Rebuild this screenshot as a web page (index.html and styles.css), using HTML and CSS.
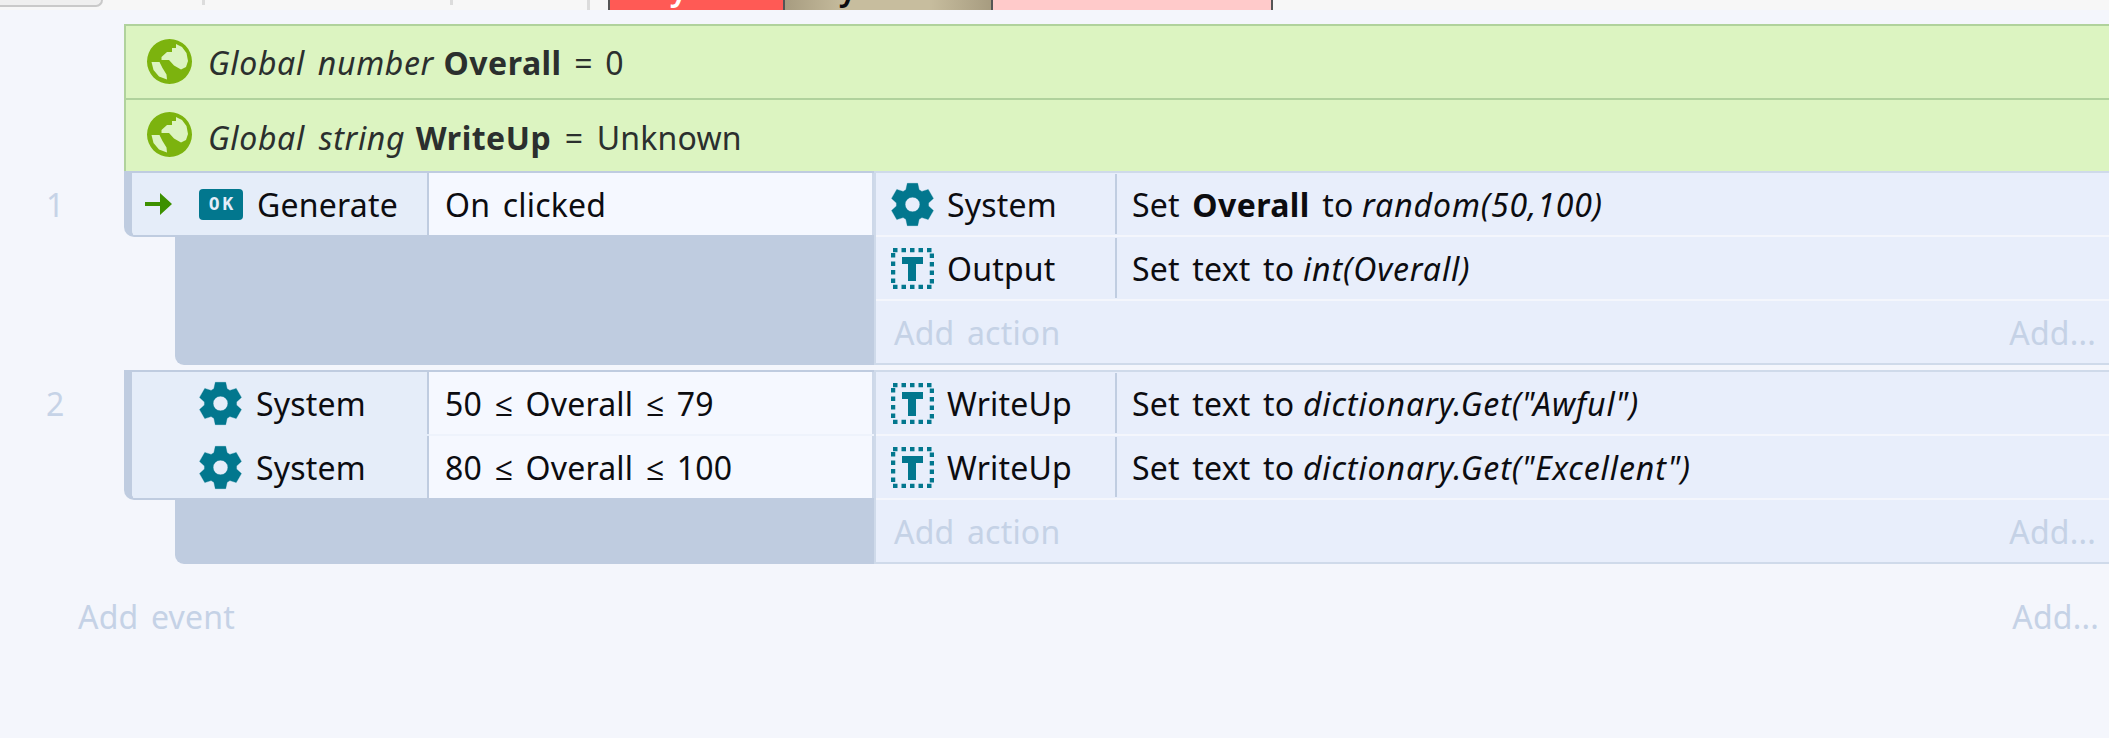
FILE: index.html
```html
<!DOCTYPE html>
<html lang="en">
<head>
<meta charset="utf-8">
<title>Event sheet</title>
<link rel="stylesheet" href="styles.css">
</head>
<body>
<svg class="defs" width="0" height="0" aria-hidden="true">
  <symbol id="gear" viewBox="0 0 24 24">
    <path fill-rule="evenodd" stroke-linejoin="round" d="M8.3 3.8 9.1.2H14.9L15.7 3.8 17.25 4.7 20.77 3.59 23.67 8.61 20.95 11.1V12.9L23.67 15.39 20.77 20.41 17.25 19.3 15.7 20.2 14.9 23.8H9.1L8.3 20.2 6.75 19.3 3.23 20.41.33 15.39 3.05 12.9V11.1L.33 8.61 3.23 3.59 6.75 4.7ZM12 7.9a4.1 4.1 0 1 0 0 8.2a4.1 4.1 0 1 0 0-8.2Z"/>
  </symbol>
  <symbol id="textobj" viewBox="0 0 43 41">
    <rect class="t-frame" x="2" y="2" width="39" height="37"/>
    <path d="M11 9H32V16H25V33H17V16H11Z"/>
  </symbol>
  <symbol id="globe" viewBox="0 0 45 45">
    <path fill-rule="evenodd" d="M22.5 0a22.5 22.5 0 1 0 0 45a22.5 22.5 0 1 0 0-45ZM29 5V9H25V13H20L14.5 18V21H22L27 26.5 34 30.5 39 28 41 22 39.5 14 35 8ZM4.5 23H12.5L15.5 29 19.5 35.5 20 40.5 12 37.5 6.5 31Z"/>
  </symbol>
</svg>

<header class="toolbar">
  <div class="tb-button"></div>
  <div class="tb-tab tb-tab-a"></div>
  <div class="tb-tab tb-tab-b"></div>
  <div class="tb-tab tb-tab-c"></div>
  <div class="seg seg-red"><span>y</span></div>
  <div class="seg seg-tan"><span>y</span></div>
  <div class="seg seg-pink"></div>
</header>

<main class="sheet">
  <section class="globals">
    <div class="global"><svg class="ic-globe"><use href="#globe"/></svg><p><i>Global number</i> <b>Overall</b> = 0</p></div>
    <div class="global"><svg class="ic-globe"><use href="#globe"/></svg><p><i>Global string</i> <b>WriteUp</b> = Unknown</p></div>
  </section>

  <section class="event">
    <div class="num">1</div>
    <div class="ev-left">
      <div class="conds">
        <div class="cond">
          <div class="cond-obj">
            <svg class="ic-arrow" viewBox="0 0 27 22"><path d="M0 9H15V0L27 11 15 22V13H0Z"/></svg>
            <span class="ic-ok">OK</span>
            <span>Generate</span>
          </div>
          <div class="cond-param">On clicked</div>
        </div>
      </div>
      <div class="tail"></div>
    </div>
    <div class="ev-right">
      <div class="act">
        <div class="act-obj"><svg class="ic-gear"><use href="#gear"/></svg><span>System</span></div>
        <div class="act-param"><span>Set <b>Overall</b> to <i>random(50,100)</i></span></div>
      </div>
      <div class="act">
        <div class="act-obj"><svg class="ic-text"><use href="#textobj"/></svg><span>Output</span></div>
        <div class="act-param"><span>Set text to <i>int(Overall)</i></span></div>
      </div>
      <div class="act act-add"><span>Add action</span><span>Add...</span></div>
    </div>
  </section>

  <section class="event">
    <div class="num">2</div>
    <div class="ev-left">
      <div class="conds">
        <div class="cond">
          <div class="cond-obj"><svg class="ic-gear"><use href="#gear"/></svg><span>System</span></div>
          <div class="cond-param">50 ≤ Overall ≤ 79</div>
        </div>
        <div class="cond">
          <div class="cond-obj"><svg class="ic-gear"><use href="#gear"/></svg><span>System</span></div>
          <div class="cond-param">80 ≤ Overall ≤ 100</div>
        </div>
      </div>
      <div class="tail"></div>
    </div>
    <div class="ev-right">
      <div class="act">
        <div class="act-obj"><svg class="ic-text"><use href="#textobj"/></svg><span>WriteUp</span></div>
        <div class="act-param"><span>Set text to <i>dictionary.Get("Awful")</i></span></div>
      </div>
      <div class="act">
        <div class="act-obj"><svg class="ic-text"><use href="#textobj"/></svg><span>WriteUp</span></div>
        <div class="act-param"><span>Set text to <i>dictionary.Get("Excellent")</i></span></div>
      </div>
      <div class="act act-add"><span>Add action</span><span>Add...</span></div>
    </div>
  </section>

  <footer class="add-event"><span>Add event</span><span>Add...</span></footer>
</main>
</body>
</html>
```
FILE: styles.css
```css
* { box-sizing: border-box; }
html, body { margin: 0; height: 100%; }
body {
  background: #f4f6fc;
  color: #0c0c10;
  font-family: "Noto Sans", "Open Sans", sans-serif;
  font-size: 32px;
  letter-spacing: 0.2px;
  word-spacing: 4px;
  overflow: hidden;
}
p { margin: 0; }
i { letter-spacing: 0.9px; }
b { letter-spacing: 0.4px; }
.defs { position: absolute; }

/* clipped toolbar at the top */
.toolbar { display: flex; height: 10px; background: #f7f7f7; overflow: hidden; }
.tb-button {
  width: 103px; height: 7px;
  background: #efefef;
  border: solid #c9c9c9; border-width: 0 2px 2px 0;
  border-bottom-right-radius: 7px;
}
.tb-tab { height: 10px; border-right: 3px solid #dcdcdc; }
.tb-tab-a { width: 102px; height: 5px; }
.tb-tab-b { width: 248px; height: 5px; }
.tb-tab-c { width: 137px; }
.seg { display: flex; border-left: 2px solid #555; line-height: 14px; overflow: hidden; }
.seg span { margin-top: -19px; font-weight: 600; }
.seg-red { width: 175px; margin-left: 18px; background: #ff5a55; color: #fff; padding-left: 60px; }
.seg-tan { width: 208px; background: linear-gradient(90deg, #a79c80, #c7bd9e 30%, #c7bd9e 70%, #a79c80); padding-left: 54px; }
.seg-pink { width: 282px; background: #ffcaca; border-right: 2px solid #555; }

.sheet { padding-top: 14px; }

/* global variables */
.globals { margin-left: 124px; border-left: 2px solid #b0d29c; }
.global {
  display: flex; align-items: center; gap: 16px;
  height: 74px; padding-left: 21px;
  background: #dcf4c1; color: #2b2f2e;
  border-top: 2px solid #b0d29c;
}
.global + .global { height: 73px; word-spacing: 5px; }
.global + .global p { padding-top: 3px; }
.global i { letter-spacing: 0.65px; }
.global b { margin-left: -3px; letter-spacing: 0.5px; }
.ic-globe { width: 45px; height: 45px; fill: #7cb30e; flex: none; margin-top: -2px; }

/* events */
.event { display: flex; margin-bottom: 5px; }
.num { width: 124px; padding: 12px 0 0 46px; color: #c6d3e7; line-height: 44px; }
.ev-left { width: 750px; display: flex; flex-direction: column; }
.conds {
  border: solid #bfcce0; border-width: 2px 0 2px 8px;
  border-bottom-left-radius: 10px;
  overflow: hidden;
}
.cond { display: flex; height: 62px; }
.cond + .cond { margin-top: 2px; }
.cond-obj {
  width: 297px; display: flex; align-items: center; gap: 14px;
  padding-left: 67px; background: #e5edf9; position: relative;
  border-right: 2px solid #bfcce0;
}
.cond-param {
  flex: 1; display: flex; align-items: center; padding-left: 16px;
  background: #f5f8ff; border-right: 2px solid #cdd8e9;
}
.cond + .cond .cond-obj { box-shadow: 0 -2px 0 #e5edf9; }
.cond + .cond .cond-param { box-shadow: 0 -2px 0 #eef3fc; }
.tail {
  flex: 1; margin-left: 51px; margin-top: -2px;
  background: #bfcce0; border-bottom-left-radius: 9px;
}
.ev-right {
  flex: 1;
  border: solid #cfdaea; border-width: 2px 0 2px 2px;
}
.act { display: flex; height: 62px; background: #e8eefb; }
.act + .act { margin-top: 2px; box-shadow: 0 -2px 0 #f4f6fc; }
.act-obj {
  width: 241px; display: flex; align-items: center; gap: 13px; padding-left: 15px;
  border-right: 2px solid #c0cde1; margin: 1px 0;
}
.act-param { display: flex; align-items: center; white-space: pre; padding-left: 15px; }
.act-param i { margin-left: -4px; }
.act-add, .add-event { justify-content: space-between; align-items: center; color: #c5d2e6; }
.act-add { padding: 0 13px 0 18px; }
.add-event { display: flex; height: 64px; margin-top: 20px; padding: 0 10px 0 78px; }

/* icons */
.ic-gear { width: 43px; height: 45px; fill: #02778e; stroke: #02778e; stroke-width: .2; flex: none; }
.ic-text { width: 43px; height: 41px; fill: #02778e; flex: none; }
.t-frame { fill: none; stroke: #02778e; stroke-width: 4.5; stroke-dasharray: 4.5 4; }
.ic-arrow { position: absolute; left: 13px; top: 20px; width: 27px; height: 22px; fill: #3d9000; }
.ic-ok {
  width: 44px; height: 31px; flex: none;
  display: flex; align-items: center; justify-content: center;
  background: #02778e; border-radius: 4px; color: #e5edf9;
  font: 700 18px/1 "DejaVu Sans Mono", monospace;
  letter-spacing: 3px; word-spacing: 0;
  padding-left: 3px;
}
```
